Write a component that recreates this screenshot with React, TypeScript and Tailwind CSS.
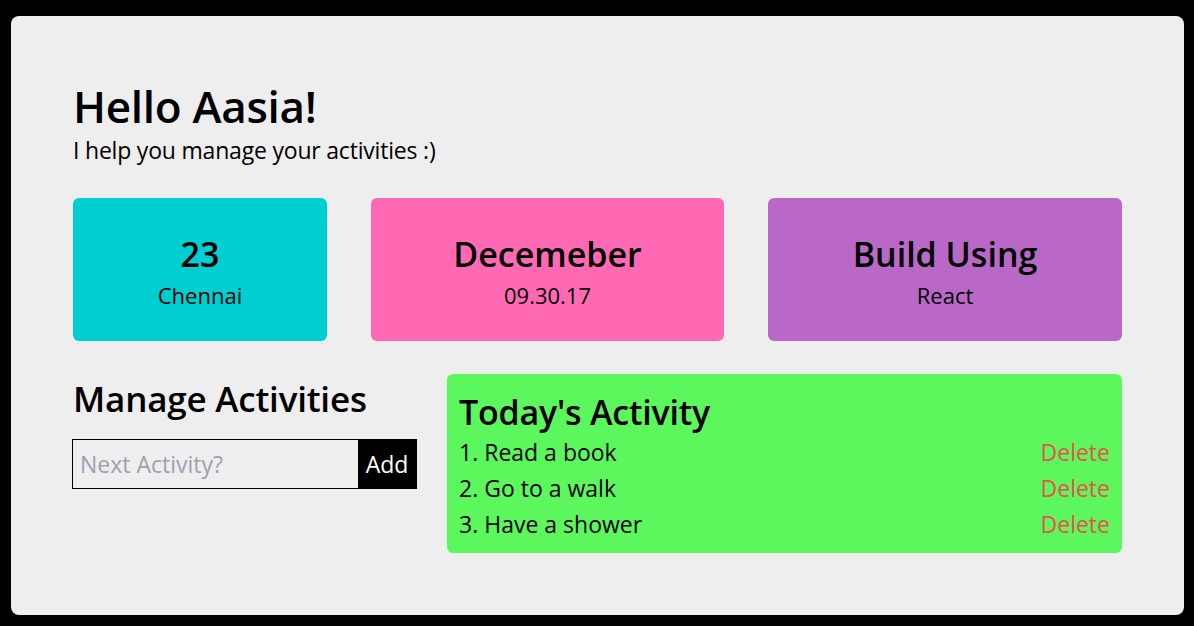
import { useState } from 'react';

const font = { fontFamily: '"Open Sans", "Noto Sans", sans-serif' };

export default function App() {
  const [items, setItems] = useState(['Read a book', 'Go to a walk', 'Have a shower']);
  const [next, setNext] = useState('');

  const add = () => {
    if (!next.trim()) return;
    setItems([...items, next.trim()]);
    setNext('');
  };

  return (
    <div className="min-h-screen bg-black pt-[16px] pl-[11px] pr-[10px] pb-[11px]" style={font}>
      <div className="h-[599px] rounded-lg bg-[#eeeeee] px-[62px] pt-[65px] text-black">
        <h1 className="text-[44px] font-semibold leading-[50px] tracking-[-0.3px]">Hello Aasia!</h1>
        <p className="mt-[5px] text-[23px] leading-[28px] tracking-[-0.2px]">I help you manage your activities :)</p>

        <div className="mt-[34px] flex gap-[44px]">
          <div className="flex h-[143px] w-[254px] flex-col items-center justify-center rounded-md bg-[#00ced1] pt-[3px]">
            <div className="text-[34px] font-semibold leading-[44px]">23</div>
            <div className="mt-[3px] text-[22px] leading-[32px]">Chennai</div>
          </div>
          <div className="flex h-[143px] w-[353px] flex-col items-center justify-center rounded-md bg-[#ff69b4] pt-[3px]">
            <div className="text-[34px] font-semibold leading-[44px]">Decemeber</div>
            <div className="mt-[3px] text-[22px] leading-[32px]">09.30.17</div>
          </div>
          <div className="flex h-[143px] flex-1 flex-col items-center justify-center rounded-md bg-[#ba68c8] pt-[3px]">
            <div className="text-[34px] font-semibold leading-[44px]">Build Using</div>
            <div className="mt-[3px] text-[22px] leading-[32px]">React</div>
          </div>
        </div>

        <div className="mt-[33px] flex gap-[30px]">
          <div className="w-[344px]">
            <h2 className="pt-[3px] text-[35px] font-semibold leading-[44px] tracking-[-0.2px]">Manage Activities</h2>
            <div className="mt-[18px] -ml-px flex h-[50px] border border-black">
              <input
                value={next}
                onChange={(e) => setNext(e.target.value)}
                placeholder="Next Activity?"
                className="min-w-0 flex-1 bg-transparent px-[7px] text-[23px] outline-none placeholder:text-[#9ca3af]"
              />
              <button onClick={add} className="-my-px w-[58px] bg-black text-[23px] text-white">
                Add
              </button>
            </div>
          </div>

          <div className="h-[179px] flex-1 rounded-md bg-[#5cf75c] px-[12px] pt-[16px]">
            <h3 className="text-[34px] font-semibold leading-[44px] tracking-[-0.2px]">Today's Activity</h3>
            <ul>
              {items.map((item, i) => (
                <li key={i} className="flex justify-between text-[23px] leading-[36px]">
                  <span>
                    {i + 1}. {item}
                  </span>
                  <button
                    onClick={() => setItems(items.filter((_, j) => j !== i))}
                    className="text-[#e8524a]"
                  >
                    Delete
                  </button>
                </li>
              ))}
            </ul>
          </div>
        </div>
      </div>
    </div>
  );
}
